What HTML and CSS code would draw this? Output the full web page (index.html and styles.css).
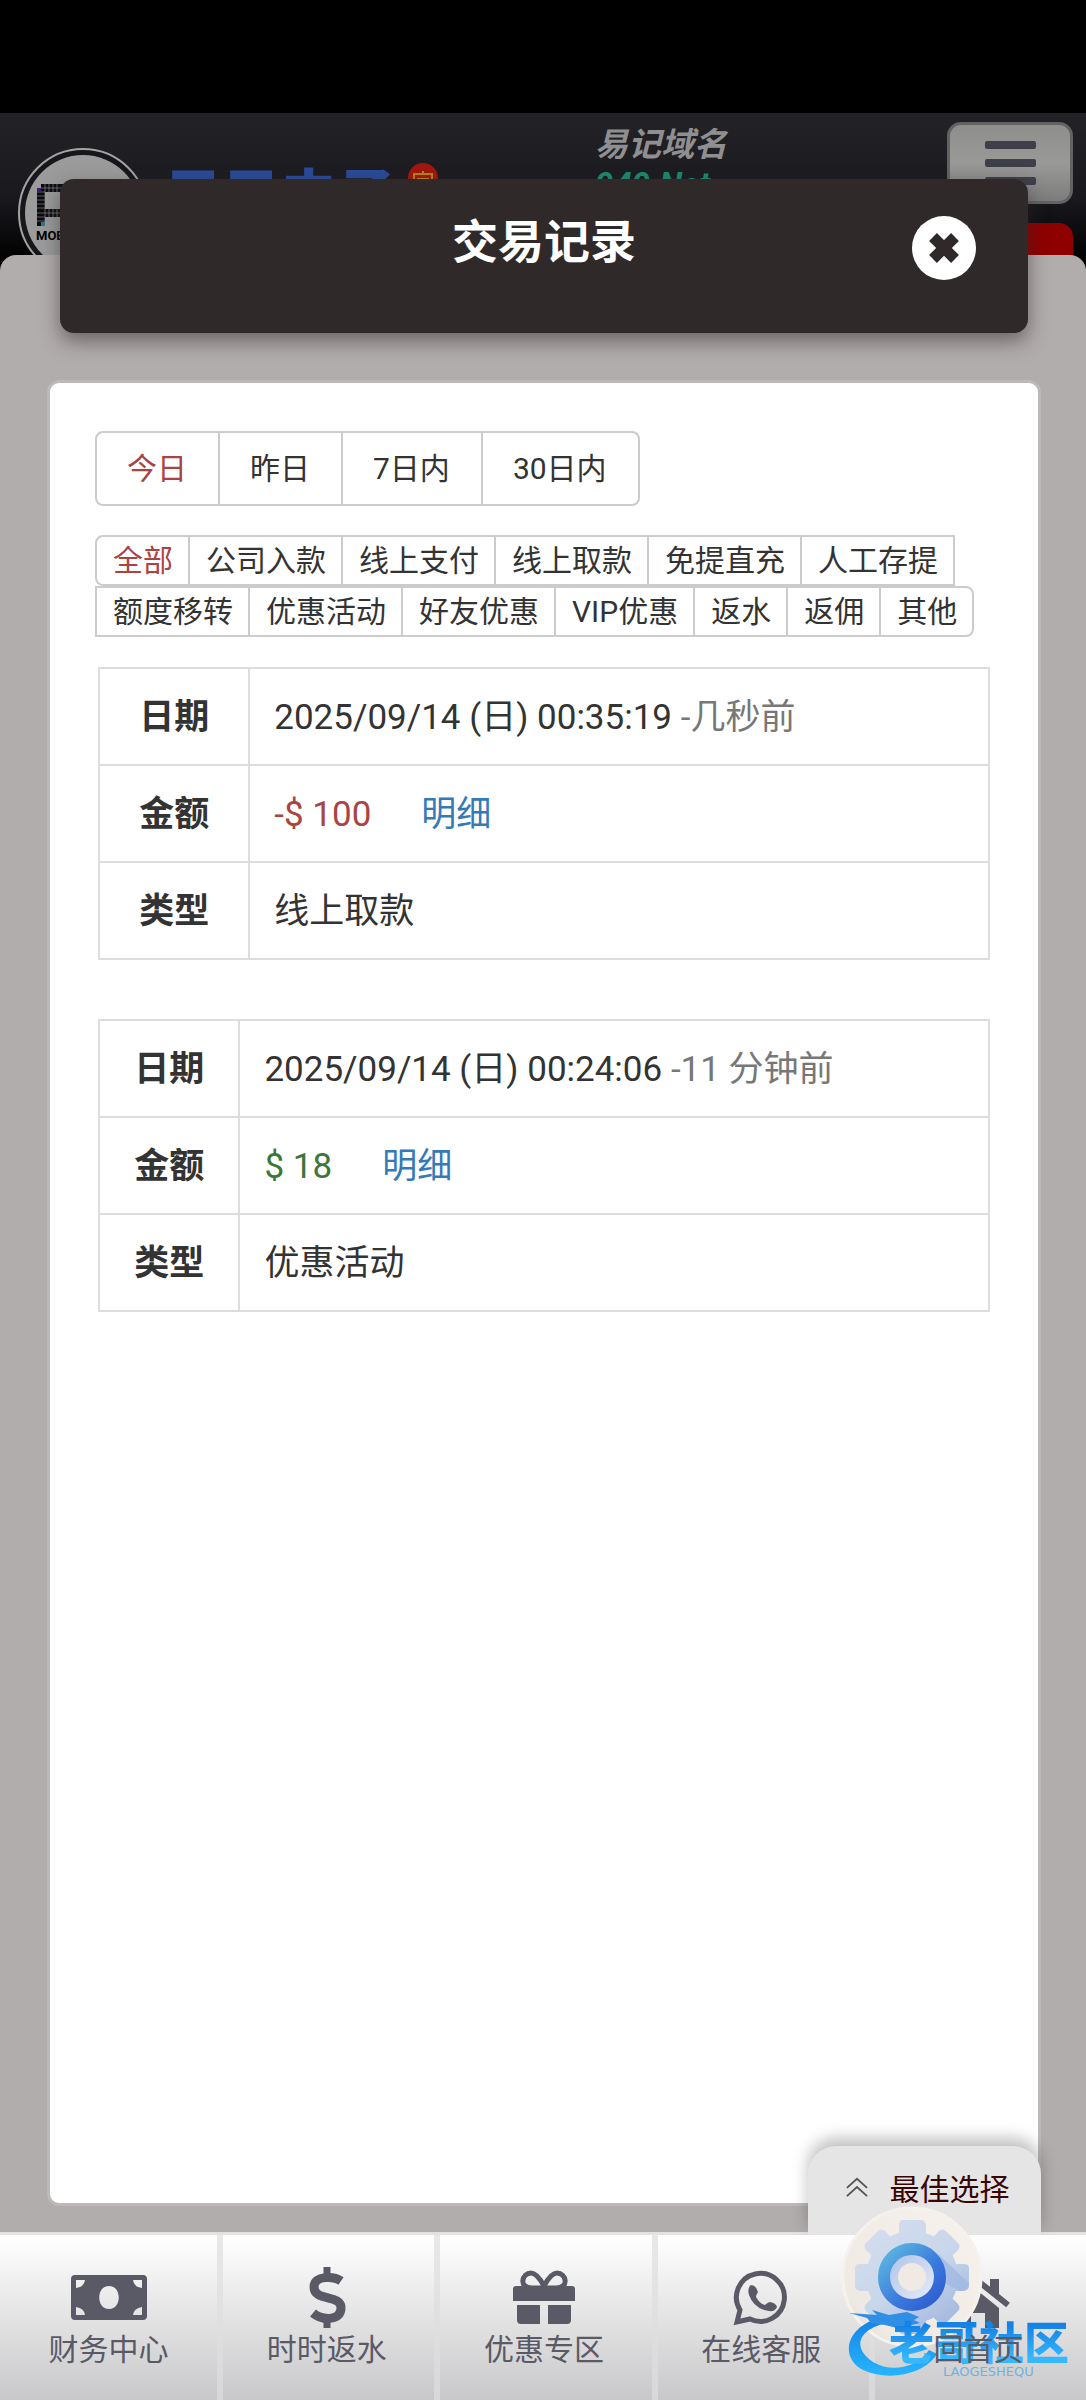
FILE: index.html
```html
<!DOCTYPE html>
<html lang="zh-CN">

<head>
    <meta charset="UTF-8">
    <meta name="viewport" content="width=device-width, initial-scale=1.0">
    <title>交易记录</title>
    <link rel="stylesheet" href="styles.css">
</head>

<body>
    <!-- dimmed page behind the dialog -->
    <div class="page">
        <div class="status-bar"></div>
        <header class="site-header">
            <svg class="logo" viewBox="0 0 130 130" aria-hidden="true">
                <circle cx="65" cy="65" r="64" fill="#17161a" stroke="#a3a3a3" stroke-width="2" />
                <circle cx="65" cy="65" r="58" fill="#9b9b9b" />
                <g stroke="#0b0b10" stroke-width="8" fill="none">
                    <path d="M23 40H62" />
                    <path d="M23 36V78" />
                    <path d="M23 65H62" />
                </g>
                <path d="M27 36V78M31 36V70M35 36V70M39 36V70M19 40H62M19 44H27M19 48H27M19 52H27M19 56H27M19 60H27M19 65H62M19 69H27M19 73H27" fill="none" stroke="#9b9b9b" stroke-width="1" opacity=".6" />
                <path d="M19 36h4v4h-4z" fill="#9b9b9b" />
                <path d="M19 40h4v4h-4z" fill="#3d1f78" />
                <path d="M23 74h4v4h-4z" fill="#2b7d88" />
                <text class="logo-text" x="18" y="92">MOBILE</text>
            </svg>
            <div class="wordmark">日日电子</div>
            <svg class="lucky" viewBox="0 0 30 30" aria-hidden="true">
                <circle cx="15" cy="15" r="15" fill="#a3170f" />
                <path d="M6 16v-5h18v5M15 8v3M9 16h12" fill="none" stroke="#b98414" stroke-width="2" />
            </svg>
            <div class="domain">
                <p>易记域名</p>
                <p class="domain-name">949.Net</p>
            </div>
            <div class="side">
                <button class="menu-btn" type="button" aria-label="菜单">
                    <span></span>
                    <span></span>
                    <span></span>
                </button>
                <div class="side-tab"></div>
            </div>
        </header>
        <div class="sheet"></div>
    </div>

    <main class="modal">
        <div class="modal-header">
            <h1>交易记录</h1>
            <button class="close" type="button" aria-label="关闭">
                <svg viewBox="0 0 64 64">
                    <circle cx="32" cy="32" r="32" fill="#fff" />
                    <path d="M21 21L43 43M43 21L21 43" stroke="#302929" stroke-width="11" />
                </svg>
            </button>
        </div>

        <section class="panel">
            <div class="btn-group days">
                <button class="active" type="button">今日</button>
                <button type="button">昨日</button>
                <button type="button">7日内</button>
                <button type="button">30日内</button>
            </div>

            <div class="btn-group types">
                <button class="active" type="button">全部</button>
                <button type="button">公司入款</button>
                <button type="button">线上支付</button>
                <button type="button">线上取款</button>
                <button type="button">免提直充</button>
                <button type="button">人工存提</button>
                <button type="button">额度移转</button>
                <button type="button">优惠活动</button>
                <button type="button">好友优惠</button>
                <button type="button">VIP优惠</button>
                <button type="button">返水</button>
                <button type="button">返佣</button>
                <button type="button">其他</button>
            </div>

            <table class="record">
                <tr>
                    <th scope="row">日期</th>
                    <td>2025/09/14 (日) 00:35:19 <span class="ago">-几秒前</span></td>
                </tr>
                <tr>
                    <th scope="row">金额</th>
                    <td><span class="out">-$ 100</span><a href="#detail">明细</a></td>
                </tr>
                <tr>
                    <th scope="row">类型</th>
                    <td>线上取款</td>
                </tr>
            </table>

            <table class="record">
                <tr>
                    <th scope="row">日期</th>
                    <td>2025/09/14 (日) 00:24:06 <span class="ago">-11 分钟前</span></td>
                </tr>
                <tr>
                    <th scope="row">金额</th>
                    <td><span class="in">$ 18</span><a href="#detail">明细</a></td>
                </tr>
                <tr>
                    <th scope="row">类型</th>
                    <td>优惠活动</td>
                </tr>
            </table>
        </section>
    </main>

    <nav class="bottom-nav">
        <button class="best" type="button">
            <svg viewBox="0 0 24 24" fill="none" stroke="#555" stroke-width="2">
                <path d="M1 13L12 3L23 13M1 22L12 12L23 22" />
            </svg>
            最佳选择
        </button>

        <a href="#finance">
            <svg viewBox="0 0 76 64">
                <path fill-rule="evenodd" d="M4 9H72Q76 9 76 13V50Q76 54 72 54H4Q0 54 0 50V13Q0 9 4 9Z
                    M5 14V22Q13 21 14 14Z M62 14Q63 21 71 22V14Z M5 49V41Q13 42 14 49Z M62 49Q63 42 71 41V49Z
                    M38 20C25 20 25 43 38 43S51 20 38 20Z" />
            </svg>
            <span>财务中心</span>
        </a>
        <a href="#rebate">
            <svg viewBox="0 0 76 64" fill="none" stroke="#5a5a67">
                <path d="M52 15C45 10 25 9 25 21C25 36 52 28 52 42C52 56 32 54 24 47" stroke-width="9" />
                <path d="M38 1V11M38 53V62" stroke-width="7" />
            </svg>
            <span>时时返水</span>
        </a>
        <a href="#promo">
            <svg viewBox="0 0 76 64">
                <path d="M10 20H66Q69 20 69 23V35H7V23Q7 20 10 20ZM11 39H34V58H15Q11 58 11 54ZM42 39H65V54Q65 58 61 58H42Z" />
                <path d="M37 22H26C12 22 16 7 25 7Q31 7 38 20Q45 7 51 7C60 7 64 22 50 22H39" fill="none" stroke="#5a5a67" stroke-width="5" />
            </svg>
            <span>优惠专区</span>
        </a>
        <a href="#service">
            <svg viewBox="0 0 76 64">
                <path d="M14 56L17 44A24 24 0 1 1 27 53Z" fill="none" stroke="#5a5a67" stroke-width="5" />
                <path d="M28 19Q33 19 35 26Q33 29 33 31Q37 38 42 39Q45 36 47 36Q53 37 54 41Q52 46 46 45Q31 43 26 29Q24 22 28 19Z" />
            </svg>
            <span>在线客服</span>
        </a>
        <a href="#home">
            <svg viewBox="0 0 76 64">
                <path d="M38 25L59 42V62H45V47H31V62H17V42Z" />
                <path d="M8 39L38 15L68 39" fill="none" stroke="#5a5a67" stroke-width="6" />
                <path d="M50 13H59V32L50 25Z" />
            </svg>
            <span class="home-label">回首页</span>
        </a>

        <div class="assist">
            <svg viewBox="0 0 240 184" aria-hidden="true">
                <defs>
                    <linearGradient id="disc" x1="0" y1="1" x2="1" y2="0">
                        <stop offset="0" stop-color="#d9d3cc" />
                        <stop offset=".2" stop-color="#efe9e3" />
                        <stop offset="1" stop-color="#f6f2ec" />
                    </linearGradient>
                    <!-- one gradient across the whole gear, not per tooth -->
                    <linearGradient id="gear" gradientUnits="userSpaceOnUse" x1="30" y1="20" x2="110" y2="130">
                        <stop offset="0" stop-color="#d3ddee" />
                        <stop offset=".5" stop-color="#c8d6eb" />
                        <stop offset="1" stop-color="#9db2dd" />
                    </linearGradient>
                    <linearGradient id="ring" x1="0" y1="0" x2="1" y2="1">
                        <stop offset=".1" stop-color="#57aee0" />
                        <stop offset=".6" stop-color="#3a78dc" />
                        <stop offset="1" stop-color="#2c5bd0" />
                    </linearGradient>
                    <linearGradient id="hub" x1="0" y1="0" x2="1" y2="1">
                        <stop offset="0" stop-color="#a9bde6" />
                        <stop offset="1" stop-color="#edf2fa" />
                    </linearGradient>
                    <linearGradient id="swoosh" x1="0" y1="0" x2="0" y2="1">
                        <stop offset="0" stop-color="#1583e6" />
                        <stop offset="1" stop-color="#27b4ff" />
                    </linearGradient>
                </defs>
                <circle cx="71" cy="71" r="69" fill="url(#disc)" stroke="#f5f2ed" stroke-width="3" />
                <g fill="url(#gear)">
                    <circle cx="71" cy="71" r="46" />
                    <path d="M62 14H80Q84 14 85 19V123Q84 128 80 128H62Q58 128 58 123V19Q58 14 62 14Z" />
                    <path d="M14 62V80Q14 84 19 85H123Q128 84 128 80V62Q128 58 123 58H19Q14 58 14 62Z" />
                    <path d="M37 25L25 37Q22 40 25 44L98 117Q102 120 105 117L117 105Q120 102 117 98L44 25Q40 22 37 25Z" />
                    <path d="M105 25L117 37Q120 40 117 44L44 117Q40 120 37 117L25 105Q22 102 25 98L98 25Q102 22 105 25Z" />
                </g>
                <path d="M96 47L128 77Q127 85 119 85L105 78Z" fill="#9fb7e2" opacity=".7" />
                <circle cx="71" cy="71" r="28" fill="url(#hub)" stroke="url(#ring)" stroke-width="12" />
                <circle cx="71" cy="71" r="14" fill="#f1e9e3" />
                <path d="M40 112C8 118 -4 150 22 164C48 176 84 168 96 148L88 144C78 160 52 168 32 156C8 140 20 120 52 116Z" fill="url(#swoosh)" />
                <path d="M8 107L36 109L31 104L48 109L66 106L78 111L73 114L79 117L70 119L60 123L44 119L30 117L26 112Z" fill="#2e8fe4" />
            </svg>
            <div class="community">
                <strong>老哥社区</strong>
                <small>LAOGESHEQU</small>
            </div>
        </div>
    </nav>
</body>

</html>
```
FILE: styles.css
```css
* {
    margin: 0;
    padding: 0;
    box-sizing: border-box;
}

body {
    position: relative;
    display: flex;
    flex-direction: column;
    min-height: 100vh;
    font-family: Roboto, "Noto Sans CJK SC", sans-serif;
    font-size: 35px;
    color: #333;
    background: #000;
}

button {
    font: inherit;
    color: inherit;
    border: none;
    background: none;
    cursor: pointer;
}

a {
    color: #337ab7;
    text-decoration: none;
}

/* page under the dialog */
.page {
    position: absolute;
    inset: 0;
    display: flex;
    flex-direction: column;
}

.status-bar {
    height: 113px;
}

.site-header {
    display: flex;
    align-items: flex-start;
    height: 165px;
    padding: 0 13px 0 18px;
    overflow: hidden;
    background: linear-gradient(#232227, #1a191e 50%, #000 90%);
}

.logo {
    width: 130px;
    margin: 35px 16px 0 0;
    flex: none;
}

.logo-text {
    font-size: 13px;
    font-weight: bold;
}

.wordmark {
    margin: 50px 12px 0 0;
    font-family: "Noto Sans CJK SC", sans-serif;
    font-size: 58px;
    font-weight: 900;
    line-height: 58px;
    color: #2a4b99;
}

.lucky {
    width: 30px;
    margin-top: 50px;
}

.domain {
    margin: 12px 0 0 157px;
    font-size: 33px;
    font-weight: bold;
    font-style: italic;
    line-height: 40px;
    color: #8f8f91;
}

.domain-name {
    color: #1d8a70;
}

.side {
    margin-left: auto;
}

.menu-btn {
    display: flex;
    flex-direction: column;
    align-items: center;
    justify-content: center;
    gap: 10px;
    width: 126px;
    height: 82px;
    margin-top: 9px;
    border: 3px solid #626262;
    border-radius: 14px;
    background: linear-gradient(#8e8e8d, #999998 50%, #7c7c7c);
}

.menu-btn span {
    width: 51px;
    height: 8px;
    border-radius: 2px;
    background: #3f3f4a;
}

.side-tab {
    height: 60px;
    margin-top: 19px;
    border-radius: 14px;
    background: #8f0000;
}

.sheet {
    flex: 1;
    margin-top: -23px;
    border-radius: 16px 16px 0 0;
    background: #b1adac;
}

/* dialog */
.modal {
    position: relative;
    flex: 1;
    display: flex;
    flex-direction: column;
    padding: 179px 45px 26px 47px;
}

.modal-header {
    display: grid;
    grid-template-columns: 1fr auto 1fr;
    align-items: start;
    height: 154px;
    margin: 0 13px;
    padding: 30px 52px 0;
    border-radius: 14px;
    background: #302929;
    box-shadow: 0 8px 20px rgba(48, 41, 41, 0.55);
}

.modal-header h1 {
    grid-column: 2;
    font-size: 46px;
    line-height: 66px;
    color: #fff;
}

.close {
    justify-self: end;
    width: 64px;
    height: 64px;
    margin-top: 7px;
}

.close svg {
    display: block;
}

.panel {
    flex: 1;
    margin-top: 47px;
    padding: 48px;
    border: 3px solid #bcb9b8;
    border-radius: 12px;
    background: #fff;
}

.btn-group {
    display: flex;
    flex-wrap: wrap;
    margin: 0 -3px;
}

.btn-group button {
    border: 2px solid #ccc;
    font-size: 30px;
    background: #fff;
}

.btn-group button + button {
    margin-left: -2px;
}

.btn-group button:first-child {
    border-radius: 8px 0 0 8px;
}

.btn-group button:last-child {
    border-radius: 0 8px 8px 0;
}

.btn-group .active {
    color: #a94442;
}

.days {
    margin-bottom: 29px;
}

.days button {
    padding: 0 31px 0 30px;
    line-height: 71px;
}

.types {
    padding-left: 2px;
    margin-bottom: 30px;
}

.types button,
.types button + button {
    margin-left: -2px;
}

.types button {
    padding: 0 15px 0 16px;
    line-height: 47px;
}

.record {
    width: 100%;
    margin-bottom: 59px;
    border-collapse: collapse;
}

.record th,
.record td {
    padding: 26px 24px 23px;
    border: 2px solid #ddd;
    line-height: 46px;
    text-align: left;
}

.record th {
    padding: 26px 22px 23px;
    text-align: center;
}

.ago {
    color: #777;
}

.out,
.in {
    margin-right: 50px;
}

.out {
    color: #a94442;
}

.in {
    color: #3c763d;
}

/* bottom bar */
.bottom-nav {
    position: relative;
    display: grid;
    grid-template-columns: repeat(5, 1fr);
    height: 168px;
    border-top: 3px solid #e3e2e2;
    background: linear-gradient(#fff, #c8c8ca);
}

.bottom-nav a {
    display: flex;
    flex-direction: column;
    align-items: center;
    padding-top: 31px;
    font-size: 30px;
    line-height: 40px;
    color: #5a5a67;
}

.bottom-nav a + a {
    padding-right: 4px;
    border-left: 6px solid rgba(222, 222, 223, 0.7);
}

.bottom-nav a svg {
    width: 76px;
    height: 64px;
    fill: #5a5a67;
}

.bottom-nav a svg[fill="none"] {
    fill: none;
}

/* the label stays readable over the helper */
.home-label {
    position: relative;
    z-index: 1;
}

.best {
    position: absolute;
    right: 45px;
    bottom: 165px;
    display: flex;
    align-items: center;
    justify-content: center;
    gap: 22px;
    width: 233px;
    height: 89px;
    padding: 0 0 8px 6px;
    border-radius: 28px 28px 0 0;
    font-size: 30px;
    color: #3a0505;
    background: #e5e5e5;
    box-shadow: 0 -8px 16px rgba(0, 0, 0, 0.25);
    clip-path: inset(-30px -30px 0);
}

.best svg {
    width: 22px;
}

/* floating helper over the bar */
.assist {
    position: absolute;
    right: 5px;
    top: -29px;
    width: 240px;
    pointer-events: none;
}

.assist svg {
    display: block;
}

.community {
    position: absolute;
    left: 48px;
    top: 110px;
    white-space: nowrap;
}

.community strong {
    display: block;
    font-family: "Noto Sans CJK SC", sans-serif;
    font-size: 45px;
    font-weight: 900;
    line-height: 50px;
    color: transparent;
    background: linear-gradient(#1583e6 20%, #35b8ff 85%);
    background-clip: text;
    -webkit-background-clip: text;
}

.community small {
    display: block;
    padding-left: 54px;
    font-family: "DejaVu Sans", sans-serif;
    font-size: 13px;
    line-height: 12px;
    color: #6fb2e2;
}
```
